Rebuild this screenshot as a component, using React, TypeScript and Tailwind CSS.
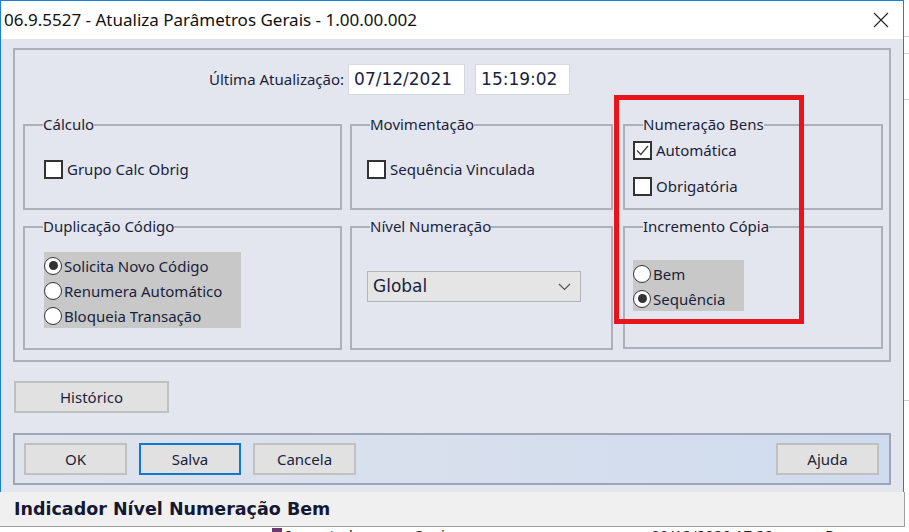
import React from "react";

const SEG = "font-['Noto_Sans',sans-serif]";
const TAH = "font-['DejaVu_Sans',sans-serif]";

function Group({
  title,
  className,
  children,
}: {
  title: string;
  className: string;
  children?: React.ReactNode;
}) {
  return (
    <div className={`relative border-2 border-[#aab1bc] ${className}`}>
      <span
        className={`absolute -top-[12px] left-[18px] bg-[#e3e6ee] text-[15px] leading-[20px] text-[#1b1e3d] ${SEG}`}
      >
        {title}
      </span>
      {children}
    </div>
  );
}

function Check({ label, checked }: { label: string; checked?: boolean }) {
  return (
    <div className="flex items-center gap-[4px]">
      <div className="w-[19px] h-[19px] border-2 border-[#333] bg-white flex items-center justify-center">
        {checked && (
          <svg width="15" height="15" viewBox="0 0 15 15">
            <path d="M2 7.5 L5.8 11.5 L13 3" fill="none" stroke="#444" strokeWidth="1.4" />
          </svg>
        )}
      </div>
      <span className={`text-[15px] leading-[20px] text-[#1b1e3d] ${SEG}`}>{label}</span>
    </div>
  );
}

function Radio({ label, checked }: { label: string; checked?: boolean }) {
  return (
    <div className="flex items-center gap-[2px] h-[25px]">
      <div className="w-[18px] h-[18px] rounded-full border-[1.5px] border-[#333] bg-white flex items-center justify-center">
        {checked && <div className="w-[9px] h-[9px] rounded-full bg-[#333]" />}
      </div>
      <span className={`text-[15px] leading-[20px] text-[#1b1e3d] ${SEG}`}>{label}</span>
    </div>
  );
}

function Btn({ label, className = "", primary }: { label: string; className?: string; primary?: boolean }) {
  return (
    <div
      className={`h-[32px] flex items-center justify-center bg-[#e1e1e1] border-2 ${
        primary ? "border-[#0f78d5]" : "border-[#c0c0c0]"
      } text-[15px] text-[#1b1e3d] ${SEG} ${className}`}
    >
      {label}
    </div>
  );
}

export default function App() {
  return (
    <div className="w-[909px] h-[532px] overflow-hidden bg-white flex flex-col relative">
      <div className="flex">
        {/* dialog */}
        <div className="w-[904px] h-[492px] border-l border-t border-r border-[#1c7fd6] flex flex-col">
          {/* title bar */}
          <div className="h-[38px] bg-white flex items-center justify-between pl-[3px] pr-[14px]">
            <span className={`text-[17px] text-[#111] ${SEG}`}>
              06.9.5527 - Atualiza Parâmetros Gerais - 1.00.00.002
            </span>
            <svg width="16" height="16" viewBox="0 0 16 16">
              <path d="M1 1 L15 15 M15 1 L1 15" stroke="#222" strokeWidth="1.1" />
            </svg>
          </div>
          {/* body */}
          <div className="flex-1 bg-[#e3e6ee] pl-[12px] pt-[9px] flex flex-col">
            <div className="w-[878px] h-[314px] border-2 border-[#aab1bc] flex flex-col">
              <div className="flex items-center pt-[14px] pl-[194px] gap-[4px]">
                <span className={`text-[15px] text-[#1b1e3d] ${SEG}`}>Última Atualização:</span>
                <div
                  className={`w-[117px] h-[31px] bg-white border border-[#d5d8de] flex items-center pl-[5px] text-[17px] text-[#1b1e3d] ${TAH}`}
                >
                  07/12/2021
                </div>
                <div
                  className={`ml-[6px] w-[95px] h-[31px] bg-white border border-[#d5d8de] flex items-center pl-[5px] text-[17px] text-[#1b1e3d] ${TAH}`}
                >
                  15:19:02
                </div>
              </div>
              <div className="flex pl-[8px] pt-[29px] gap-[8px]">
                <Group title="Cálculo" className="w-[319px] h-[86px] pl-[19px] pt-[33px]">
                  <Check label="Grupo Calc Obrig" />
                </Group>
                <Group title="Movimentação" className="w-[263px] h-[86px] pl-[15px] pt-[33px]">
                  <Check label="Sequência Vinculada" />
                </Group>
                <Group title="Numeração Bens" className="ml-[2px] w-[260px] h-[86px] pl-[8px] pt-[14px] flex flex-col gap-[16px]">
                  <Check label="Automática" checked />
                  <Check label="Obrigatória" />
                </Group>
              </div>
              <div className="flex pl-[8px] pt-[16px] gap-[8px]">
                <Group title="Duplicação Código" className="w-[319px] h-[124px] pl-[19px] pt-[24px]">
                  <div className="w-[197px] h-[76px] bg-[#c8c8c8] pt-[1px]">
                    <Radio label="Solicita Novo Código" checked />
                    <Radio label="Renumera Automático" />
                    <Radio label="Bloqueia Transação" />
                  </div>
                </Group>
                <Group title="Nível Numeração" className="w-[263px] h-[124px] pl-[15px] pt-[43px]">
                  <div className="w-[214px] h-[31px] bg-[#e5e5e5] border border-[#b5b5b5] flex items-center justify-between pl-[5px] pr-[9px]">
                    <span className={`text-[17px] text-[#1b1e3d] ${TAH}`}>Global</span>
                    <svg width="13" height="8" viewBox="0 0 13 8">
                      <path d="M1 1 L6.5 6.5 L12 1" fill="none" stroke="#555" strokeWidth="1.2" />
                    </svg>
                  </div>
                </Group>
                <Group title="Incremento Cópia" className="ml-[2px] w-[260px] h-[123px] pl-[8px] pt-[32px]">
                  <div className="w-[111px] h-[51px] bg-[#c8c8c8] pt-[1px]">
                    <Radio label="Bem" />
                    <Radio label="Sequência" checked />
                  </div>
                </Group>
              </div>
            </div>
            <Btn label="Histórico" className="mt-[19px] ml-[1px] w-[155px]" />
            <div className="mt-[20px] w-[878px] h-[52px] border-2 border-[#9ca6b6] bg-gradient-to-r from-[#dfe3ec] to-[#cfdbee] flex items-center pl-[9px] pr-[10px] gap-[12px]">
              <Btn label="OK" className="w-[103px]" />
              <Btn label="Salva" className="w-[102px]" primary />
              <Btn label="Cancela" className="w-[103px]" />
              <div className="flex-1" />
              <Btn label="Ajuda" className="w-[103px]" />
            </div>
          </div>
        </div>
        {/* underlying app strip */}
        <div className="flex-1 flex flex-col">
          <div className="h-[36px]" />
          <div className="h-[1px] bg-[#cfcfcf]" />
          <div className="h-[16px]" />
          <div className="h-[1px] bg-[#cfcfcf]" />
          <div className="h-[45px]" />
          <div className="h-[1px] bg-[#cfcfcf]" />
          <div className="h-[300px]" />
          <div className="h-[1px] bg-[#cfcfcf]" />
        </div>
      </div>
      {/* status bar */}
      <div className="w-[905px] h-[35px] bg-[#f0f0f0] border-r border-b border-[#a0a0a0] flex items-center pl-[14px]">
        <span className={`text-[17.5px] font-bold text-[#141833] ${TAH}`}>Indicador Nível Numeração Bem</span>
      </div>
      {/* underlying rows peeking */}
      <div className="h-[5px] overflow-hidden flex items-start text-[15px] text-[#222]">
        <div className="ml-[272px] mt-[1px] w-[10px] h-[10px] bg-[#6b3b6b]" />
        <span className={`ml-[4px] -mt-[3px] ${SEG}`}>Importador mar - Copia</span>
        <span className={`ml-[198px] -mt-[3px] ${SEG}`}>09/12/2020 17:22</span>
        <span className={`ml-[52px] -mt-[3px] ${SEG}`}>Progresso</span>
      </div>
      {/* red annotation */}
      <div className="absolute left-[614px] top-[95px] w-[190px] h-[229px] border-[5px] border-[#e8141c] pointer-events-none" />
    </div>
  );
}
